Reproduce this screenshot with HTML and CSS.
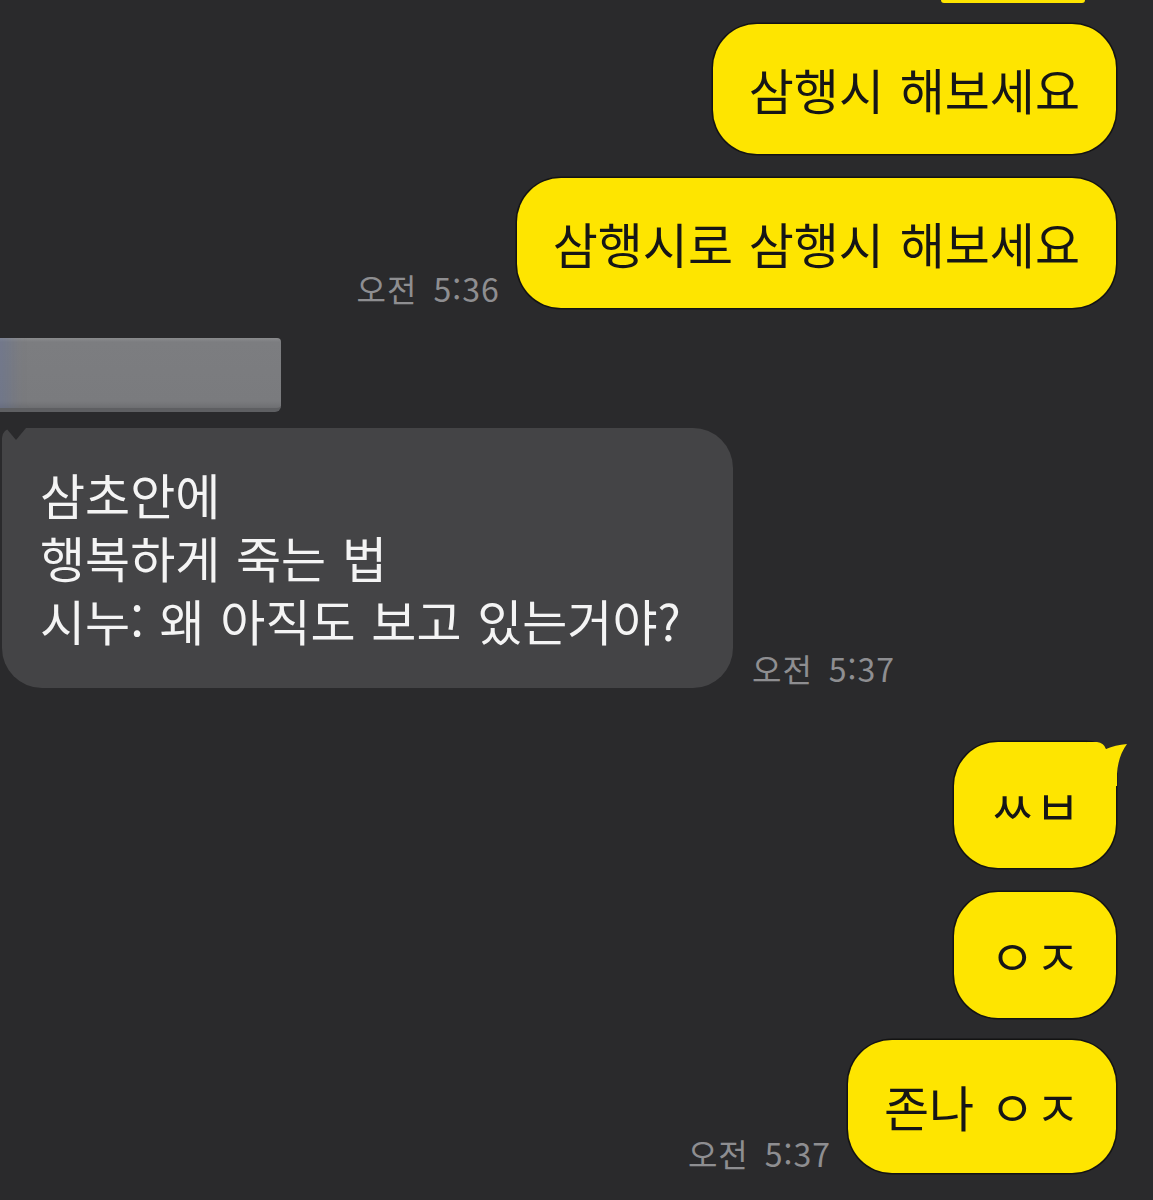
FILE: index.html
```html
<!DOCTYPE html>
<html lang="ko">
<head>
  <meta charset="UTF-8" />
  <title>채팅</title>
  <link rel="stylesheet" href="styles.css">
</head>
<body>

<div class="chat">
  <div class="row me"><div class="stub"></div></div>

  <div class="row me first">
    <div class="bubble mine">삼행시 해보세요</div>
  </div>

  <div class="row me gap-sm">
    <span class="time">오전 5:36</span>
    <div class="bubble mine">삼행시로 삼행시 해보세요</div>
  </div>

  <div class="sender">
    <div class="name-blur"></div>
  </div>

  <div class="row other">
    <div class="bubble theirs">삼초안에<br>행복하게 죽는 법<br>시누: 왜 아직도 보고 있는거야?<svg class="notch" width="20" height="14" viewBox="0 0 20 14"><path d="M0 0 H20 L10 12 Z" fill="#2a2a2c"/></svg></div>
    <span class="time">오전 5:37</span>
  </div>

  <div class="row me gap-lg">
    <div class="bubble mine small tailed">ㅆㅂ<svg class="tail-right" width="40" height="44" viewBox="0 0 40 44"><path d="M0 0 H10 Q17 1 19 7 Q28 3 40 2 Q31 14 30 32 V44 H0 Z" fill="#fee500"/></svg></div>
  </div>

  <div class="row me gap-sm">
    <div class="bubble mine small">ㅇㅈ</div>
  </div>

  <div class="row me gap-xs">
    <span class="time">오전 5:37</span>
    <div class="bubble mine last">존나 ㅇㅈ</div>
  </div>
</div>

</body>
</html>
```

FILE: styles.css
```css
body {
  margin: 0;
  background-color: #2a2a2c;
  font-family: "Noto Sans CJK KR", sans-serif;
  height: 1200px;
  overflow: hidden;
}

.chat {
  display: flex;
  flex-direction: column;
}

.row {
  display: flex;
  align-items: flex-end;
}

.row.me {
  justify-content: flex-end;
  padding-right: 37px;
  gap: 17px;
}

.row.other {
  margin-top: 16px;
  padding-left: 2px;
  gap: 19px;
}

.row.first {
  margin-top: 21px;
}

.gap-xs {
  margin-top: 22px;
}

.gap-sm {
  margin-top: 24px;
}

.gap-lg {
  margin-top: 54px;
}

.stub {
  width: 144px;
  height: 3px;
  margin-right: 31px;
  background-color: #fee500;
  border-radius: 0 0 4px 4px;
}

.bubble {
  position: relative;
  font-size: 49px;
  word-spacing: 2px;
  white-space: nowrap;
}

.mine {
  background-color: #fee500;
  color: #161616;
  line-height: 62px;
  padding: 34px 36px;
  border-radius: 44px;
  box-shadow: 0 0 0 1.5px rgba(0, 0, 0, 0.55);
}

.mine.small {
  padding: 32px 36px;
}

.mine.last {
  padding: 35px 36px 36px;
}

.mine.tailed {
  border-top-right-radius: 30px;
}

.tail-right {
  position: absolute;
  top: 0;
  right: -11px;
}

.theirs {
  width: 651px;
  background-color: #444446;
  color: #f4f4f4;
  line-height: 63px;
  padding: 34px 42px 37px 38px;
  border-radius: 10px 40px 40px 40px;
}

.notch {
  position: absolute;
  top: 0;
  left: 4px;
}

.time {
  color: #8e8e91;
  font-size: 32px;
  line-height: 1;
  letter-spacing: 1px;
  word-spacing: 6px;
  padding-bottom: 4px;
}

.sender {
  margin-top: 30px;
  display: flex;
}

.name-blur {
  width: 281px;
  height: 70px;
  border-bottom: 4px solid #5e5f62;
  border-radius: 0 4px 6px 0;
  background: linear-gradient(to bottom, #8a8b8d 0, #7c7d80 6%, #7a7b7e 90%, #6e6f72 100%);
  box-shadow: inset 30px -4px 16px -20px rgba(90, 110, 170, 0.3);
}
```
